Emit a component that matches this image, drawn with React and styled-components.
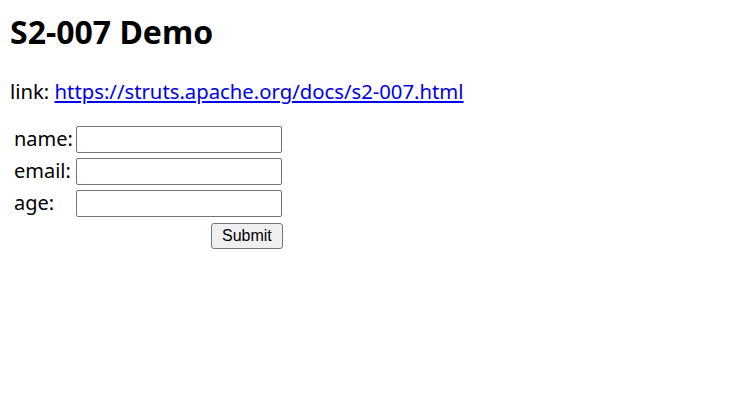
import React from 'react';
import styled, { createGlobalStyle } from 'styled-components';

const GlobalStyle = createGlobalStyle`
  html, body {
    margin: 0;
    background: #fff;
  }
  body {
    padding: 10px;
    font-family: "Noto Sans", "Open Sans", sans-serif;
    color: #000;
  }
`

const Title = styled.h1`
  font-size: 32px;
  font-weight: 700;
  margin: 2px 0 0;
  line-height: 40px;
`
const LinkLine = styled.p`
  font-size: 20.3px;
  margin: 25px 0 0;
  line-height: 28px;
`
const DocLink = styled.a`
  color: #0000ee;
  text-decoration: underline;
`
const Form = styled.form`
  margin-top: 17px;
`
const Table = styled.table`
  border-spacing: 2px;
  font-size: 20px;
`
const LabelCell = styled.td`
  padding: 1px 1px 1px 2px;
  vertical-align: middle;
  line-height: 28px;
`
const FieldCell = styled.td`
  padding: ${(p) => (p.right ? '0' : '1px 1px 1px 0')};
  text-align: ${(p) => (p.right ? 'right' : 'left')};
`
const Input = styled.input`
  box-sizing: border-box;
  width: 206px;
  height: 27px;
  border: 1px solid #767676;
  border-radius: 2px;
  padding: 1px 3px;
  font-size: 16px;
  display: block;
`
const Button = styled.button`
  box-sizing: border-box;
  width: 72px;
  height: 26px;
  margin-top: -1px;
  font-family: "Liberation Sans", Arial, sans-serif;
  font-size: 16px;
  background: #efefef;
  border: 1px solid #767676;
  border-radius: 3px;
  color: #000;
  padding: 0;
`

const fields = [
  { label: 'name:', name: 'name' },
  { label: 'email:', name: 'email' },
  { label: 'age:', name: 'age' },
];

const App = () => {
  return (
    <>
      <GlobalStyle />
      <Title>S2-007 Demo</Title>
      <LinkLine>
        link: <DocLink href="https://struts.apache.org/docs/s2-007.html">https://struts.apache.org/docs/s2-007.html</DocLink>
      </LinkLine>
      <Form onSubmit={(e) => e.preventDefault()}>
        <Table>
          <tbody>
            {fields.map((f) => (
              <tr key={f.name}>
                <LabelCell>{f.label}</LabelCell>
                <FieldCell><Input name={f.name} type="text" /></FieldCell>
              </tr>
            ))}
            <tr>
              <FieldCell colSpan={2} right>
                <Button type="submit">Submit</Button>
              </FieldCell>
            </tr>
          </tbody>
        </Table>
      </Form>
    </>
  );
};

export default App;
